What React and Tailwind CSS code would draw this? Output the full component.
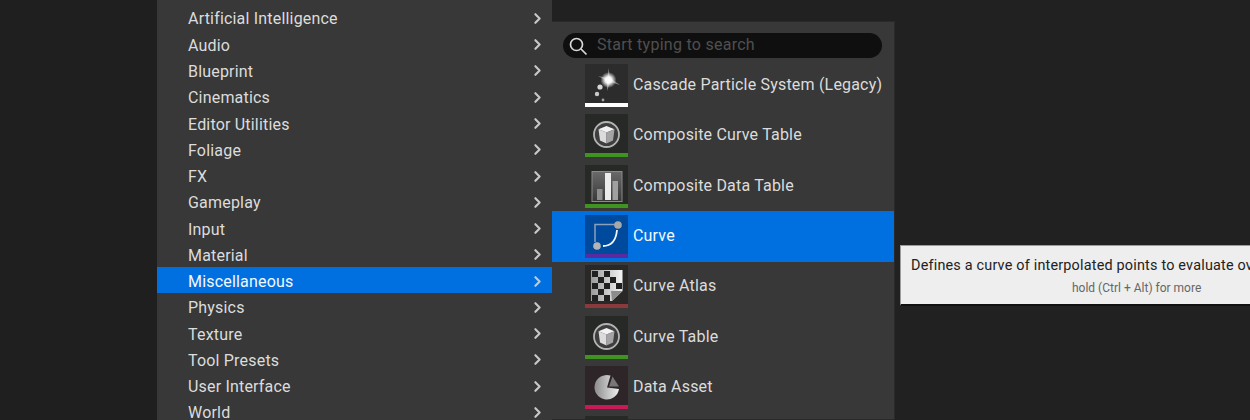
import { ChevronRight } from "lucide-react";

const categories = [
  "Artificial Intelligence",
  "Audio",
  "Blueprint",
  "Cinematics",
  "Editor Utilities",
  "Foliage",
  "FX",
  "Gameplay",
  "Input",
  "Material",
  "Miscellaneous",
  "Physics",
  "Texture",
  "Tool Presets",
  "User Interface",
  "World",
];

function ParticleIcon() {
  return (
    <svg viewBox="0 0 43 39" className="h-[39px] w-[43px]">
      <defs>
        <radialGradient id="glow">
          <stop offset="0%" stopColor="#fff" />
          <stop offset="40%" stopColor="#fff" stopOpacity="0.95" />
          <stop offset="100%" stopColor="#fff" stopOpacity="0" />
        </radialGradient>
      </defs>
      <path d="M23.5 4 L25 14 L35 21 L25 18 L22 27 L22 17 L13 12 L22.5 14 Z" fill="#fff" opacity="0.4" />
      <circle cx="23.5" cy="16" r="8" fill="url(#glow)" />
      <circle cx="15" cy="23" r="2.6" fill="#d8d8d8" />
      <circle cx="12" cy="30" r="2.2" fill="#c8c8c8" />
      <circle cx="18" cy="36" r="1.4" fill="#a0a0a0" />
    </svg>
  );
}

function CubeIcon() {
  return (
    <svg viewBox="0 0 43 39" className="h-[39px] w-[43px]">
      <circle cx="21.5" cy="20.5" r="12.5" fill="#3e3e3e" stroke="#b4b4b4" strokeWidth="1.8" />
      <path d="M21.5 12 L29.5 15.2 L21.5 18.6 L13.5 15.2 Z" fill="#f2f2f2" />
      <path d="M13.5 15.2 L21.5 18.6 L21.5 29.5 L15 26.5 Z" fill="#dcdcdc" />
      <path d="M29.5 15.2 L21.5 18.6 L21.5 29.5 L28 26.5 Z" fill="#a4a4a4" />
    </svg>
  );
}

function BarsIcon() {
  return (
    <svg viewBox="0 0 43 39" className="h-[39px] w-[43px]">
      <defs>
        <linearGradient id="frame" x1="0" y1="0" x2="0" y2="1">
          <stop offset="0%" stopColor="#6a6a6a" />
          <stop offset="100%" stopColor="#383838" />
        </linearGradient>
      </defs>
      <rect x="7" y="6.5" width="30" height="30" fill="url(#frame)" stroke="#8a8a8a" />
      <rect x="12" y="24" width="5.5" height="11" fill="#8e8e8e" />
      <rect x="20" y="8" width="6" height="27" fill="#ececec" />
      <rect x="27.5" y="16" width="5.5" height="19" fill="#a0a0a0" />
    </svg>
  );
}

function CurveIcon() {
  return (
    <svg viewBox="0 0 43 39" className="h-[39px] w-[43px]">
      <path d="M10 27 V9.5 H30" fill="none" stroke="#8aa0bd" strokeWidth="1.5" />
      <path d="M18 31 C26 31 31 26 32 15" fill="none" stroke="#f2f6fb" strokeWidth="1.8" />
      <circle cx="33" cy="10" r="3.8" fill="#a8a8a8" />
      <circle cx="12" cy="31" r="3.8" fill="#b4b4b4" />
    </svg>
  );
}

function AtlasIcon() {
  // 5x5 checker on a sheet, the low right corner is curled over
  const dark = [
    [0, 0],
    [2, 0],
    [1, 1],
    [3, 1],
    [0, 2],
    [2, 2],
    [4, 2],
    [1, 3],
    [0, 4],
    [2, 4],
  ];
  return (
    <svg viewBox="0 0 43 39" className="h-[39px] w-[43px]">
      <defs>
        <linearGradient id="sheet" x1="0" y1="0" x2="1" y2="0">
          <stop offset="0%" stopColor="#9a9a9a" />
          <stop offset="100%" stopColor="#f4f4f4" />
        </linearGradient>
      </defs>
      <path d="M6 5 H37.5 V26 L27 36 H6 Z" fill="url(#sheet)" />
      {dark.map(([col, row]) => (
        <rect key={`${col}-${row}`} x={7 + col * 6} y={6 + row * 6} width="6" height="6" fill="#202020" />
      ))}
      <path d="M37.5 26 L27 36 L26 26 Z" fill="#8c8c8c" />
    </svg>
  );
}

function PieIcon() {
  return (
    <svg viewBox="0 0 43 39" className="h-[39px] w-[43px]">
      <defs>
        <linearGradient id="pie" x1="0" y1="0" x2="1" y2="0">
          <stop offset="0%" stopColor="#8c8c8c" />
          <stop offset="100%" stopColor="#efefef" />
        </linearGradient>
      </defs>
      <path d="M22 21.5 L25.5 9.5 A12.3 12.3 0 1 0 34 23 Z" fill="url(#pie)" />
      <path d="M24 20.5 L27.5 10.5 L34 20.5 Z" fill="#777" />
    </svg>
  );
}

const assets = [
  { name: "Cascade Particle System (Legacy)", Icon: ParticleIcon, bg: "bg-[#2c2c2c]", strip: "bg-white" },
  { name: "Composite Curve Table", Icon: CubeIcon, bg: "bg-[#272927]", strip: "bg-[#3f9320]" },
  { name: "Composite Data Table", Icon: BarsIcon, bg: "bg-[#272927]", strip: "bg-[#3f9320]" },
  { name: "Curve", Icon: CurveIcon, bg: "bg-[#004a9e]", strip: "bg-[#5a2a9e]", active: true },
  { name: "Curve Atlas", Icon: AtlasIcon, bg: "bg-[#2a2727]", strip: "bg-[#8a3a3a]" },
  { name: "Curve Table", Icon: CubeIcon, bg: "bg-[#272927]", strip: "bg-[#3f9320]" },
  { name: "Data Asset", Icon: PieIcon, bg: "bg-[#2e2528]", strip: "bg-[#c81a56]" },
  { name: "", Icon: null, bg: "bg-[#272927]", strip: "bg-transparent" },
];

export default function App() {
  return (
    <div className="relative flex h-[420px] w-[1250px] overflow-hidden bg-[#212121] font-['Roboto',sans-serif] text-[16px] tracking-[0.19px] text-[#dcdcdc]">
      <div className="w-[157px] shrink-0 bg-[#1f1f1f]" />

      <div className="flex w-[395px] shrink-0 flex-col bg-[#383838] pt-[4.3px]">
        {categories.map((name) => (
          <div
            key={name}
            className={`flex h-[26.27px] shrink-0 items-center justify-between pl-[31px] pr-[6px] pt-[2px] ${
              name === "Miscellaneous" ? "bg-[#0070e0] text-[#f4f8fd]" : ""
            }`}
          >
            <span className="mt-[2px]">{name}</span>
            <ChevronRight size={17} strokeWidth={3} className="text-[#c8c8c8]" />
          </div>
        ))}
      </div>

      <div className="mt-[21px] flex w-[343px] shrink-0 flex-col border border-l-0 border-[#2a2a2a] bg-[#383838]">
        <div className="ml-[11px] mr-[12px] mt-[11px] flex h-[25px] shrink-0 items-center gap-[9px] rounded-full bg-[#0f0f0f] pl-[5px]">
          <svg viewBox="0 0 20 20" className="h-[20px] w-[20px] text-[#d8d8d8]" fill="none" stroke="currentColor" strokeWidth="1.7">
            <circle cx="8.5" cy="8.5" r="6" />
            <path d="M13 13 L18.5 18.5" />
          </svg>
          <span className="mb-[2px] tracking-[0.27px] text-[#4f4f4f]">Start typing to search</span>
        </div>
        <div className="mt-[2.5px] flex flex-col">
          {assets.map(({ name, Icon, bg, strip, active }, i) => (
            <div
              key={i}
              className={`flex h-[50.3px] shrink-0 items-center gap-[5px] pl-[33px] ${
                active ? "bg-[#0070e0] text-[#f4f8fd]" : ""
              }`}
            >
              <div className={`flex h-[43px] w-[43px] shrink-0 flex-col ${bg}`}>
                <div className="h-[39px]">{Icon && <Icon />}</div>
                <div className={`h-[4px] ${strip}`} />
              </div>
              <span className="mb-[1px] whitespace-nowrap">{name}</span>
            </div>
          ))}
        </div>
      </div>

      <div className="absolute left-[900px] top-[245px] h-[61px] w-[400px] border border-b-2 border-[#9c9c9c] border-b-[#111] bg-[#eeeeee] pl-[10px] pt-[11px]">
        <div className="whitespace-nowrap text-[14.4px] leading-[18px] tracking-[0.2px] text-[#222]">
          Defines a curve of interpolated points to evaluate over time.
        </div>
        <div className="mt-[5px] pl-[161px] text-[12px] leading-[16px] tracking-normal text-[#666]">hold (Ctrl + Alt) for more</div>
      </div>
    </div>
  );
}
